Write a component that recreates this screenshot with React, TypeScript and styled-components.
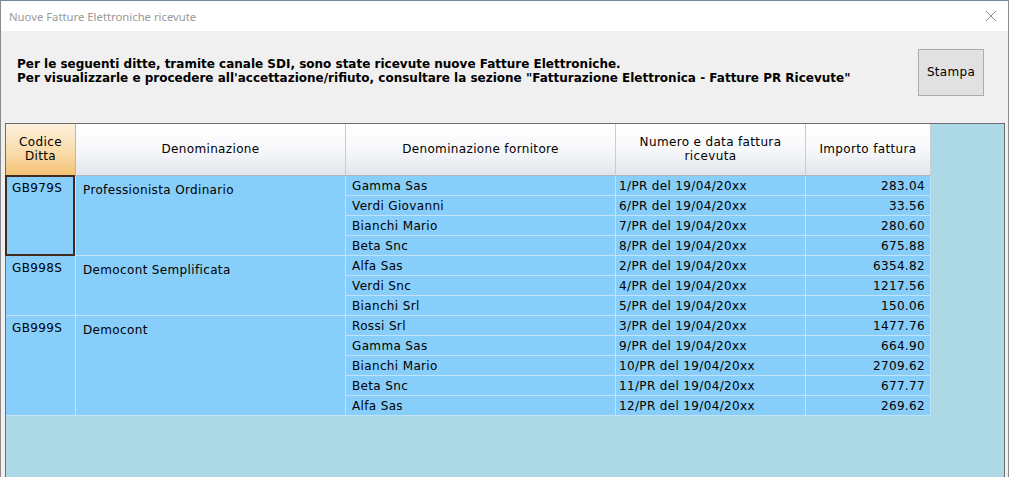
import React from "react";
import styled, { createGlobalStyle } from "styled-components";

const Global = createGlobalStyle`
  html, body { margin: 0; padding: 0; overflow: hidden; background: #f0f0f0; }
  * { box-sizing: border-box; }
`;

const Window = styled.div`
  width: 1009px;
  height: 477px;
  border-top: 1px solid #6b8ba4;
  border-left: 1px solid #8a8a8a;
  border-right: 1px solid #8a8a8a;
  background: #f0f0f0;
  display: flex;
  flex-direction: column;
  overflow: hidden;
`;

const TitleBar = styled.div`
  height: 30px;
  flex: none;
  background: #ffffff;
  display: flex;
  align-items: center;
  justify-content: space-between;
  padding: 0 8px 0 8px;
  font-family: "Segoe UI", "Noto Sans", "Open Sans", sans-serif;
  font-size: 11.3px;
  color: #9a9a9a;
`;

const CloseIcon = styled.svg`
  width: 12px;
  height: 12px;
  margin-right: 3px;
`;

const Body = styled.div`
  flex: 1;
  display: flex;
  flex-direction: column;
  padding: 0 0 0 4px;
  min-height: 0;
`;

const Top = styled.div`
  height: 92px;
  flex: none;
  display: flex;
  justify-content: space-between;
  padding: 18px 24px 0 12px;
`;

const Message = styled.div`
  padding-top: 8px;
  font-family: Verdana, "DejaVu Sans", sans-serif;
  font-weight: bold;
  font-size: 12px;
  line-height: 14px;
  color: #000;
`;

const PrintButton = styled.button`
  width: 66px;
  height: 47px;
  background: #e1e1e1;
  border: 1px solid #adadad;
  font-family: Verdana, "DejaVu Sans", sans-serif;
  font-size: 12px;
  letter-spacing: 0.3px;
  color: #000;
  padding: 0 0 2px 0;
`;

const GridFrame = styled.div`
  flex: 1;
  width: 1000px;
  border: 1px solid #6e6e6e;
  border-bottom: none;
  background: #add8e6;
  min-height: 0;
`;

const Table = styled.div`
  display: grid;
  grid-template-columns: 70px 270px 270px 190px 125px;
  grid-template-rows: 52px repeat(12, 20px);
  font-family: Verdana, "DejaVu Sans", sans-serif;
  font-size: 12px;
  letter-spacing: 0.35px;
  color: #000;
  width: 925px;
`;

const HeaderCell = styled.div<{ $active?: boolean }>`
  display: flex;
  align-items: center;
  justify-content: center;
  text-align: center;
  line-height: 14px;
  border-right: 1px solid ${(p) => (p.$active ? "#e0b070" : "#c9ccd2")};
  border-bottom: 1px solid #b0b4bc;
  background: ${(p) =>
    p.$active
      ? "linear-gradient(#fdf0dc 0%, #f9dcaa 55%, #f4c275 100%)"
      : "linear-gradient(#ffffff 0%, #f7f8fa 50%, #e2e5ec 100%)"};
  padding-bottom: 2px;
`;

const Cell = styled.div<{ $span?: number; $align?: "left" | "right"; $top?: number; $left?: number }>`
  grid-row: span ${(p) => p.$span ?? 1};
  background: #87cefa;
  border-right: 1px solid #c4e2f6;
  border-bottom: 1px solid #c4e2f6;
  text-align: ${(p) => p.$align ?? "left"};
  padding: ${(p) => p.$top ?? 3}px 5px 0 ${(p) => p.$left ?? 6}px;
  line-height: 14px;
  white-space: nowrap;
  position: relative;
`;

const Selection = styled.div`
  position: absolute;
  inset: -1px 0 -1px -1px;
  border: 2px solid #3f2c1e;
  pointer-events: none;
`;

type Group = {
  code: string;
  name: string;
  rows: [string, string, string][];
};

const groups: Group[] = [
  {
    code: "GB979S",
    name: "Professionista Ordinario",
    rows: [
      ["Gamma Sas", "1/PR del 19/04/20xx", "283.04"],
      ["Verdi Giovanni", "6/PR del 19/04/20xx", "33.56"],
      ["Bianchi Mario", "7/PR del 19/04/20xx", "280.60"],
      ["Beta Snc", "8/PR del 19/04/20xx", "675.88"],
    ],
  },
  {
    code: "GB998S",
    name: "Democont Semplificata",
    rows: [
      ["Alfa Sas", "2/PR del 19/04/20xx", "6354.82"],
      ["Verdi Snc", "4/PR del 19/04/20xx", "1217.56"],
      ["Bianchi Srl", "5/PR del 19/04/20xx", "150.06"],
    ],
  },
  {
    code: "GB999S",
    name: "Democont",
    rows: [
      ["Rossi Srl", "3/PR del 19/04/20xx", "1477.76"],
      ["Gamma Sas", "9/PR del 19/04/20xx", "664.90"],
      ["Bianchi Mario", "10/PR del 19/04/20xx", "2709.62"],
      ["Beta Snc", "11/PR del 19/04/20xx", "677.77"],
      ["Alfa Sas", "12/PR del 19/04/20xx", "269.62"],
    ],
  },
];

export default function App() {
  return (
    <>
      <Global />
      <Window>
        <TitleBar>
          <span>Nuove Fatture Elettroniche ricevute</span>
          <CloseIcon viewBox="0 0 12 12">
            <path d="M1 1 L11 11 M11 1 L1 11" stroke="#8c8c8c" strokeWidth="1" fill="none" />
          </CloseIcon>
        </TitleBar>
        <Body>
          <Top>
            <Message>
              Per le seguenti ditte, tramite canale SDI, sono state ricevute nuove Fatture Elettroniche.
              <br />
              Per visualizzarle e procedere all'accettazione/rifiuto, consultare la sezione "Fatturazione
              Elettronica - Fatture PR Ricevute"
            </Message>
            <PrintButton>Stampa</PrintButton>
          </Top>
          <GridFrame>
            <Table>
              <HeaderCell $active>
                Codice
                <br />
                Ditta
              </HeaderCell>
              <HeaderCell>Denominazione</HeaderCell>
              <HeaderCell>Denominazione fornitore</HeaderCell>
              <HeaderCell>
                Numero e data fattura
                <br />
                ricevuta
              </HeaderCell>
              <HeaderCell>Importo fattura</HeaderCell>
              {groups.map((g, gi) =>
                g.rows.map((r, ri) => (
                  <React.Fragment key={`${gi}-${ri}`}>
                    {ri === 0 && (
                      <>
                        <Cell $span={g.rows.length} $top={5} $left={6}>
                          {g.code}
                          {gi === 0 && <Selection />}
                        </Cell>
                        <Cell $span={g.rows.length} $top={7} $left={7}>
                          {g.name}
                        </Cell>
                      </>
                    )}
                    <Cell>{r[0]}</Cell>
                    <Cell $left={3}>{r[1]}</Cell>
                    <Cell $align="right">{r[2]}</Cell>
                  </React.Fragment>
                ))
              )}
            </Table>
          </GridFrame>
        </Body>
      </Window>
    </>
  );
}
